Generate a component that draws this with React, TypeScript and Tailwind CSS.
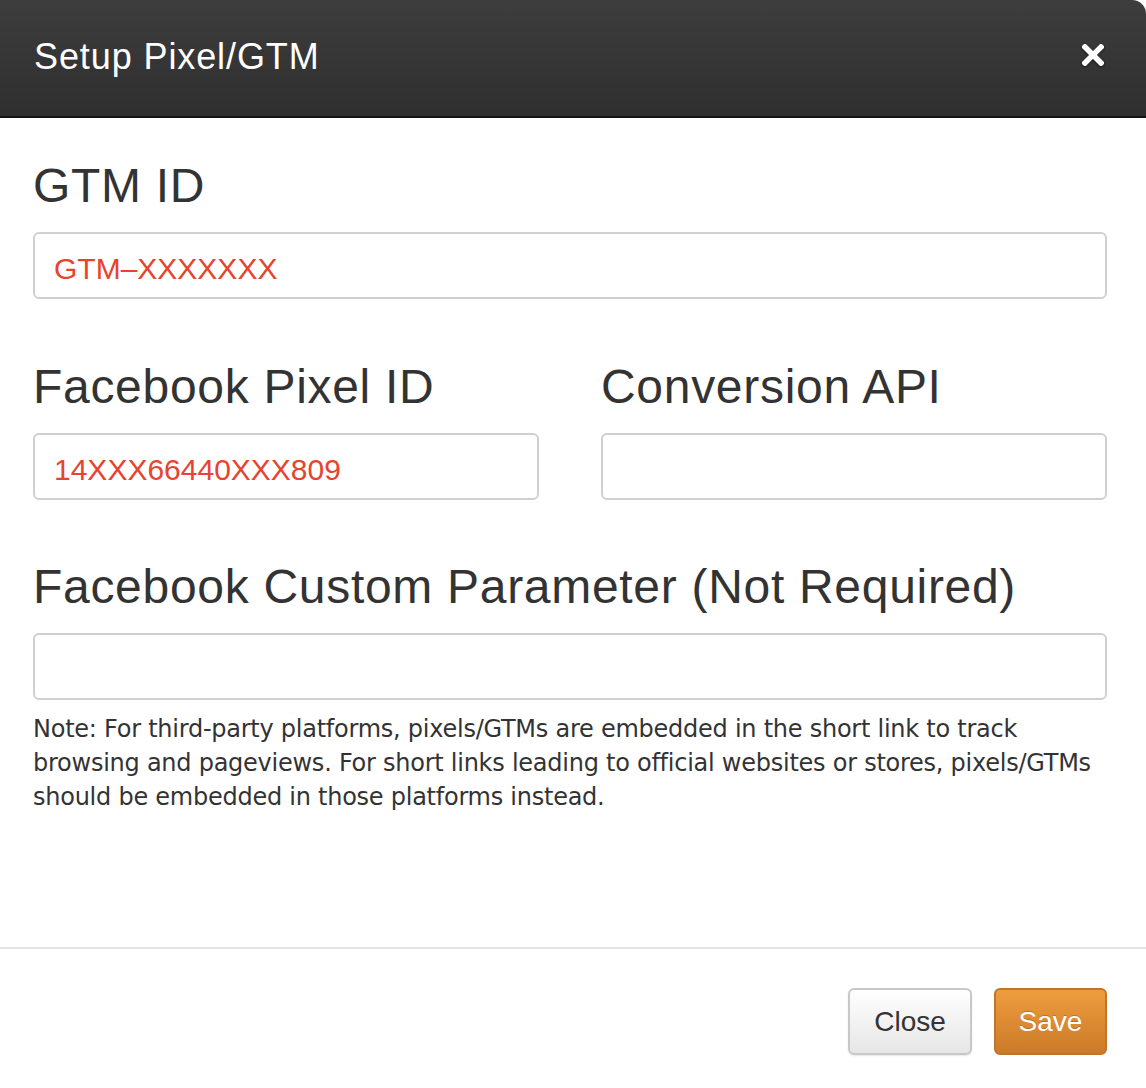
import { useState } from 'react';

function Field({ label, value, onChange, red }: { label: string; value: string; onChange: (v: string) => void; red?: boolean }) {
  return (
    <div className="flex flex-col">
      <label className="pt-[2px] text-[48px] leading-none tracking-[0.7px] text-[#333] font-['Liberation_Sans',Arial,sans-serif]">{label}</label>
      <input
        className={`mt-[22px] h-[67px] w-full rounded-[6px] border-2 border-[#d0d0d0] bg-white px-[19px] pt-[6px] text-[30px] font-['Liberation_Sans',Arial,sans-serif] outline-none ${red ? 'text-[#e8432d]' : 'text-[#333]'}`}
        value={value}
        onChange={(e) => onChange(e.target.value)}
      />
    </div>
  );
}

function App() {
  const [gtm, setGtm] = useState('GTM–XXXXXXX');
  const [pixel, setPixel] = useState('14XXX66440XXX809');
  const [api, setApi] = useState('');
  const [param, setParam] = useState('');

  return (
    <div className="w-[1146px] h-[1088px] bg-white flex flex-col overflow-hidden rounded-tr-[14px] font-['Liberation_Sans',Arial,sans-serif]">
      {/* header */}
      <div className="h-[118px] shrink-0 flex items-center justify-between pl-[34px] pr-[42px] bg-gradient-to-b from-[#3d3d3d] to-[#2f2f2f] border-b-2 border-[#141414]">
        <h3 className="text-[36px] text-white leading-none tracking-[0.9px] -mt-[2px]">Setup Pixel/GTM</h3>
        <button className="w-[22px] h-[22px] -mt-[6px] drop-shadow-[0_1px_1px_rgba(0,0,0,0.6)]">
          <svg viewBox="0 0 22 22" width="22" height="22">
            <path d="M3 3 L19 19 M19 3 L3 19" stroke="white" strokeWidth="5.5" strokeLinecap="square" />
          </svg>
        </button>
      </div>

      {/* body */}
      <div className="flex-1 pl-[33px] pr-[39px] pt-[42px]">
        <Field label="GTM ID" value={gtm} onChange={setGtm} red />

        <div className="mt-[62px] grid grid-cols-2 gap-x-[62px]">
          <Field label="Facebook Pixel ID" value={pixel} onChange={setPixel} red />
          <Field label="Conversion API" value={api} onChange={setApi} />
        </div>

        <div className="mt-[61px]">
          <Field label="Facebook Custom Parameter (Not Required)" value={param} onChange={setParam} />
        </div>

        <p className="mt-[12px] -mr-[8px] text-[24px] leading-[34px] tracking-[-0.25px] text-[#333] font-['DejaVu_Sans',Verdana,sans-serif]">
          Note: For third-party platforms, pixels/GTMs are embedded in the short link to track browsing and pageviews. For short links leading to official websites or stores, pixels/GTMs should be embedded in those platforms instead.
        </p>
      </div>

      {/* footer */}
      <div className="h-[141px] shrink-0 border-t-2 border-[#e5e5e5] flex justify-end items-start pt-[39px] pr-[39px] gap-[22px]">
        <button className="h-[67px] w-[124px] rounded-[6px] border-2 border-[#c8c8c8] bg-gradient-to-b from-white to-[#e6e6e6] text-[28px] text-[#333] shadow-[0_1px_2px_rgba(0,0,0,0.1)]">
          Close
        </button>
        <button className="h-[67px] w-[113px] rounded-[6px] border-2 border-[#c27428] bg-gradient-to-b from-[#ee9d3e] to-[#cc7a28] text-[28px] text-white [text-shadow:0_-1px_0_rgba(0,0,0,0.2)]">
          Save
        </button>
      </div>
    </div>
  );
}

export default App;
